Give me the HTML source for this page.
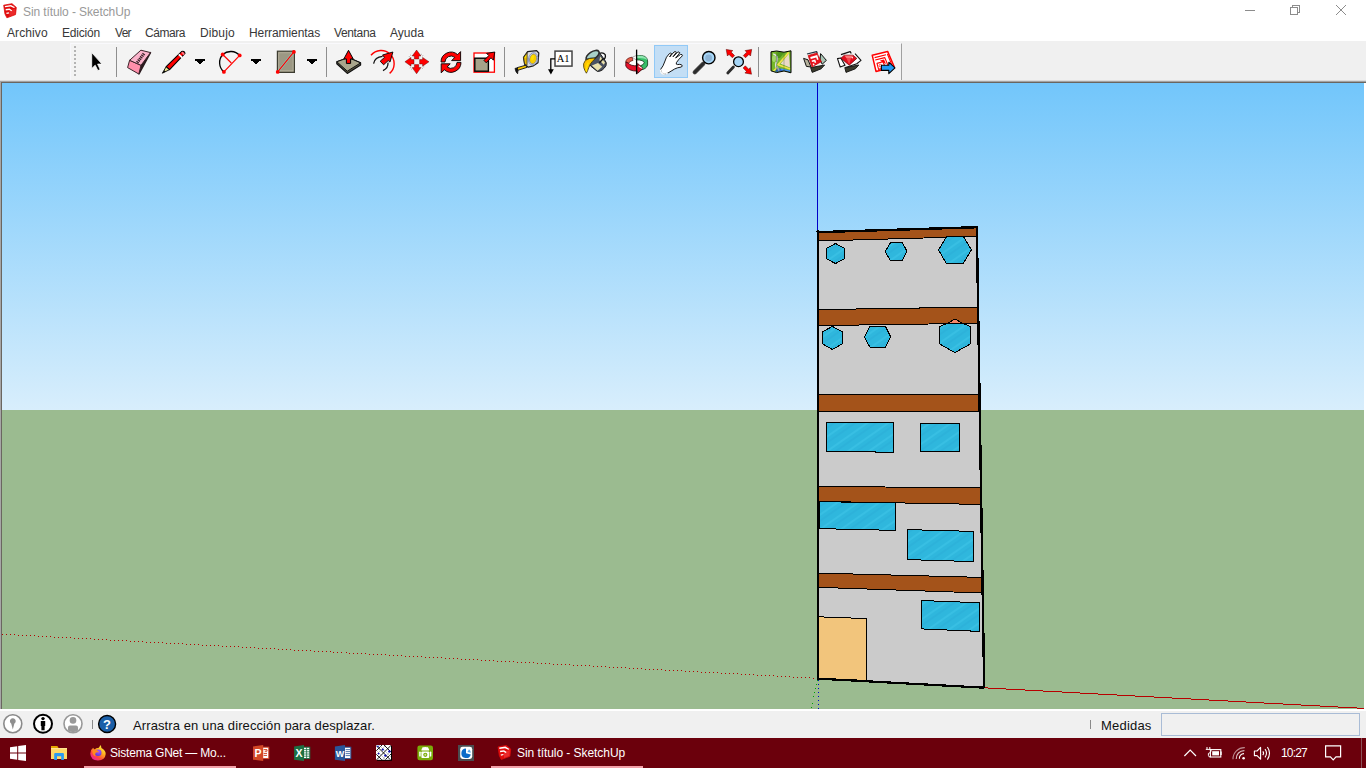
<!DOCTYPE html>
<html>
<head>
<meta charset="utf-8">
<title>Sin título - SketchUp</title>
<style>
html,body{margin:0;padding:0;}
body{width:1366px;height:768px;overflow:hidden;position:relative;background:#ffffff;font-family:"Liberation Sans",sans-serif;}
.abs{position:absolute;}
.t{position:absolute;white-space:nowrap;line-height:1;}
#titletxt{left:23px;top:6px;font-size:12px;color:#999999;letter-spacing:-0.1px;}
.menu{top:27px;font-size:12px;color:#383838;}
#toolband{left:0;top:41px;width:1366px;height:40px;background:#f0f0f0;}
#toolbar{left:70px;top:43px;width:832px;height:38px;background:#f3f3f3;border-right:1px solid #a0a0a0;border-top:1px solid #f9f9fc;border-left:1px solid #f7f7fb;box-sizing:border-box;}
#tbshadow{left:0;top:80px;width:1366px;height:3px;background:linear-gradient(#dcdcdc 0,#dcdcdc 1px,#a2a2a2 1px,#a2a2a2 2px,#6a6660 2px);}
#vp{left:0;top:82px;width:1366px;height:627px;background:linear-gradient(90deg,#a6a6a6 0,#a6a6a6 1px,#6a6660 1px);}
#sky{left:2px;top:83px;width:1362px;height:327px;background:linear-gradient(#72c6fb,#d8eefc);}
#ground{left:2px;top:410px;width:1362px;height:299px;background:#9bbb90;}
#vpright{left:1364px;top:83px;width:2px;height:626px;background:#ffffff;}
#status{left:0;top:709px;width:1366px;height:29px;background:#f0f0f0;border-top:2px solid #ffffff;box-sizing:border-box;}
#stxt{left:133px;top:719px;font-size:13px;color:#111111;letter-spacing:0.1px;}
#medidas{left:1101px;top:719px;font-size:13px;color:#111111;letter-spacing:0.2px;}
#mbox{left:1161px;top:713px;width:199px;height:23px;border:1px solid #a9bcd6;box-sizing:border-box;background:#f0f0f0;}
#taskbar{left:0;top:738px;width:1366px;height:30px;background:#6b000c;}
.tk{position:absolute;white-space:nowrap;line-height:1;font-size:12px;color:#ffffff;top:747px;}
svg{position:absolute;left:0;top:0;overflow:visible;}
</style>
</head>
<body>
<!-- title + menu -->
<div class="t" id="titletxt">Sin título - SketchUp</div>
<div class="t menu" style="left:7px;letter-spacing:0.1px">Archivo</div>
<div class="t menu" style="left:62px;letter-spacing:-0.2px">Edición</div>
<div class="t menu" style="left:115px;letter-spacing:-0.7px">Ver</div>
<div class="t menu" style="left:145px;letter-spacing:-0.45px">Cámara</div>
<div class="t menu" style="left:200px;letter-spacing:0.12px">Dibujo</div>
<div class="t menu" style="left:249px;letter-spacing:-0.08px">Herramientas</div>
<div class="t menu" style="left:334px;letter-spacing:-0.36px">Ventana</div>
<div class="t menu" style="left:390px;letter-spacing:0px">Ayuda</div>

<!-- toolbar band -->
<div class="abs" id="toolband"></div>
<div class="abs" id="toolbar"></div>
<div class="abs" id="tbshadow"></div>

<!-- viewport -->
<div class="abs" id="vp"></div>
<div class="abs" id="sky"></div>
<div class="abs" id="ground"></div>
<div class="abs" id="vpright"></div>

<!-- status bar -->
<div class="abs" id="status"></div>
<div class="t" id="stxt">Arrastra en una dirección para desplazar.</div>
<div class="t" id="medidas">Medidas</div>
<div class="abs" id="mbox"></div>

<!-- taskbar -->
<div class="abs" id="taskbar"></div>
<div class="tk" style="left:110px;letter-spacing:-0.21px">Sistema GNet — Mo...</div>
<div class="tk" style="left:517px;letter-spacing:-0.06px">Sin título - SketchUp</div>
<div class="tk" style="left:1281px;letter-spacing:-0.85px">10:27</div>

<!--TB--><svg id="tbicons" width="1366" height="768" viewBox="0 0 1366 768">
<g id="sulogo"><path d="M3.7 5.2 L12 3.7 L16.3 7.4 L15.5 14.6 L6.9 17.8 L4.9 13.8 Z" fill="#e00b0b" stroke="#e00b0b" stroke-width="0.8" stroke-linejoin="round"/>
<path d="M9.4 10.6 L15.4 8.4 L15 14.2 L9.6 16.2 Z" fill="#ea2a2a"/>
<path d="M4.8 5.9 L11 4.9 L15 7.2 L14 8.1 L10.6 6.5 L5 7.3 Z M5.6 9.1 L9.6 8.5 L12.2 10.4 L11.4 11.3 L9.2 10 L5.8 10.6 Z M6.2 12.8 L8.8 12.3 L9.2 13.4 L6.6 14 Z" fill="#fff"/></g>
<g fill="none" stroke="#8c8c8c" stroke-width="1" shape-rendering="crispEdges">
<line x1="1245" y1="10.5" x2="1255" y2="10.5"/>
<rect x="1290.5" y="7.5" width="7" height="7"/>
<path d="M1292.5 7.5 V5.5 H1299.5 V12.5 H1297.5"/>
</g>
<path d="M1336 5 L1346 15 M1346 5 L1336 15" stroke="#8c8c8c" stroke-width="1" fill="none"/>
</svg><!--/TB-->
<!--SCENE-->
<svg id="scene" width="1366" height="768" viewBox="0 0 1366 768" shape-rendering="crispEdges">
<defs>
<pattern id="glass" width="14" height="12" patternUnits="userSpaceOnUse" patternTransform="rotate(-35)">
<rect width="14" height="12" fill="#2fb7dd"/>
<rect x="0" y="3" width="14" height="2" fill="#48cdee" opacity="0.35"/>
<rect x="0" y="8" width="14" height="1.5" fill="#27a8d2" opacity="0.35"/>
</pattern>
<clipPath id="vpclip"><rect x="2" y="83" width="1362" height="626"/></clipPath>
</defs>
<g clip-path="url(#vpclip)">
<!-- axes -->
<line x1="817.5" y1="83" x2="817.5" y2="232" stroke="#0000c8" stroke-width="1"/>
<line x1="2" y1="634.2" x2="817" y2="678.3" stroke="#b40000" stroke-width="1" stroke-dasharray="1 3"/>
<line x1="984" y1="687.8" x2="1364" y2="708.4" stroke="#b80000" stroke-width="1"/>
<line x1="818.5" y1="680" x2="818.5" y2="709" stroke="#0000c8" stroke-width="1" stroke-dasharray="1 3"/>
<line x1="817.5" y1="680" x2="811" y2="709" stroke="#00a000" stroke-width="1" stroke-dasharray="1 3"/>
<!-- wall -->
<polygon points="817.5,232 976.5,227 984,687.5 818,678.5" fill="#cbcbcb"/>
<!-- band 1 (top) -->
<polygon points="818,232.6 976,227.6 976.3,236.5 818,241" fill="#a4531a"/>
<polyline points="818,241 976.3,236.5" fill="none" stroke="#000" stroke-width="1"/>
<!-- band 2 -->
<polygon points="818,309.6 977.5,307.1 977.8,323.3 818,325.6" fill="#a4531a" stroke="#000" stroke-width="1"/>
<!-- band 3 -->
<polygon points="818,394.4 978.8,394.4 979,411.6 818,411.6" fill="#a4531a" stroke="#000" stroke-width="1"/>
<!-- band 4 -->
<polygon points="818,486.3 980.3,488 980.6,504.4 818,501.4" fill="#a4531a" stroke="#000" stroke-width="1"/>
<!-- band 5 -->
<polygon points="818,573.1 982,577.4 982.3,593 818,587.3" fill="#a4531a" stroke="#000" stroke-width="1"/>
<!-- hexagons floor 1 -->
<polygon points="835.5,243.5 844.6,248.4 844.6,258.6 835.5,263.6 826.5,258.6 826.5,248.4" fill="url(#glass)" stroke="#000" stroke-width="1"/>
<polygon points="885.1,251.8 890.6,242.4 902.3,242.4 906.9,251.2 902.3,260.6 890.4,260.6" fill="url(#glass)" stroke="#000" stroke-width="1"/>
<polygon points="938.5,250 946.5,236.8 963.5,236.8 971.5,249.8 963.3,263.3 946.2,263.3" fill="url(#glass)" stroke="#000" stroke-width="1"/>
<!-- hexagons floor 2 -->
<polygon points="832.3,326.4 842.7,332 842.7,343.6 832.3,349.5 822.2,343.6 822.2,332" fill="url(#glass)" stroke="#000" stroke-width="1"/>
<polygon points="864.3,337 870.2,326 885.2,326 890.5,336.6 885.2,347.6 870.2,347.6" fill="url(#glass)" stroke="#000" stroke-width="1"/>
<polygon points="955,319 962.5,323.4 947.5,323.4" fill="#f4876a" stroke="#000" stroke-width="1"/>
<polygon points="947.5,323.4 962.5,323.4 970.4,326.4 970.6,343.8 955,352.6 939.3,343.8 939.3,326.6" fill="url(#glass)" stroke="#000" stroke-width="1"/>
<!-- windows floor 3 -->
<polygon points="826.3,422.3 893,422.3 893,452.4 875,452.4 875,451.6 826.3,451.6" fill="url(#glass)" stroke="#000" stroke-width="1"/>
<rect x="920.3" y="423.3" width="39.4" height="28.3" fill="url(#glass)" stroke="#000" stroke-width="1"/>
<!-- windows floor 4 -->
<polygon points="819,501.6 895.5,503 895.5,530.4 819,528.6" fill="url(#glass)" stroke="#000" stroke-width="1"/>
<polygon points="907.3,529.6 973.7,531.4 973.7,561.6 907.3,559.6" fill="url(#glass)" stroke="#000" stroke-width="1"/>
<!-- window floor 5 -->
<polygon points="921.5,600.5 979.6,602.8 979.6,631.4 921.5,628.9" fill="url(#glass)" stroke="#000" stroke-width="1"/>
<!-- door -->
<polygon points="818.2,616.8 866.5,618.6 866.5,680.4 818.2,678.5" fill="#f2c57c" stroke="#000" stroke-width="1"/>
<!-- outline -->
<polyline points="816.5,232.2 977.5,227.2" fill="none" stroke="#000" stroke-width="2.4"/>
<polyline points="817.7,230 818.2,679" fill="none" stroke="#000" stroke-width="2.4"/>
<polyline points="976.8,226 984.2,688" fill="none" stroke="#000" stroke-width="2.4"/>
<polyline points="817.5,678.6 984.5,687.7" fill="none" stroke="#000" stroke-width="2.2"/>
</g>
</svg>
<!--/SCENE-->
<!--ICONS-->
<svg id="icons" width="1366" height="768" viewBox="0 0 1366 768">
<!-- gripper -->
<g fill="#b4b4b4">
<rect x="74" y="46" width="2" height="2"/><rect x="74" y="50" width="2" height="2"/><rect x="74" y="54" width="2" height="2"/><rect x="74" y="58" width="2" height="2"/><rect x="74" y="62" width="2" height="2"/><rect x="74" y="66" width="2" height="2"/><rect x="74" y="70" width="2" height="2"/><rect x="74" y="74" width="2" height="2"/>
</g>
<!-- separators -->
<g stroke="#8e8e8e" stroke-width="1" shape-rendering="crispEdges">
<line x1="116.5" y1="47" x2="116.5" y2="77"/>
<line x1="326.5" y1="47" x2="326.5" y2="77"/>
<line x1="504.5" y1="47" x2="504.5" y2="77"/>
<line x1="614.5" y1="47" x2="614.5" y2="77"/>
<line x1="758.5" y1="47" x2="758.5" y2="77"/>
</g>
<!-- select arrow -->
<path d="M91.7 52.6 L91.7 68.6 L95.2 65.2 L97.9 70.6 L100.2 69.5 L97.6 64.1 L102 64.1 Z" fill="#000" stroke="#fff" stroke-width="0.8" stroke-linejoin="round"/>
<!-- eraser -->
<g stroke-linejoin="round">
<path d="M150.5 52.6 L139 74 L141 65.3 Z" fill="#2a1a1e" stroke="#2a1a1e" stroke-width="1.4"/>
<path d="M129.6 60.3 L141 65.3 L138.8 74 L127.6 67.6 Z" fill="#ff8fab" stroke="#3a2228" stroke-width="1"/>
<path d="M140.9 50.2 L150.5 52.6 L141 65.3 L129.6 60.3 Z" fill="#fbb3cb" stroke="#3a2228" stroke-width="1"/>
<path d="M137.2 62.6 L144 53.6" stroke="#3a2228" stroke-width="3" stroke-dasharray="1.3 0.7" fill="none"/>
</g>
<!-- pencil -->
<g>
<path d="M162.4 73.2 L166.2 66.6 L169.6 69.6 Z" fill="#e8e090" stroke="#000" stroke-width="0.9" stroke-linejoin="round"/>
<path d="M162.4 73.2 L164.3 70.2 L165.7 71.4 Z" fill="#000"/>
<path d="M166.2 66.6 L181.6 51.6 Q184.2 50.6 185 53.4 L169.6 69.6 Z" fill="#f00" stroke="#000" stroke-width="1.1" stroke-linejoin="round"/>
<path d="M178.8 54.4 L182.2 57.6" stroke="#fff" stroke-width="1.8"/>
<path d="M181.8 52.2 L184.3 54.6" stroke="#ff7d8d" stroke-width="1.6"/>
</g>
<!-- dropdown arrows -->
<g fill="#000" shape-rendering="crispEdges">
<path d="M195 59 h10 v2 h-2 v1 h-1 v1 h-1 v1 h-2 v-1 h-1 v-1 h-1 v-1 h-2 z"/>
<path d="M251 59 h10 v2 h-2 v1 h-1 v1 h-1 v1 h-2 v-1 h-1 v-1 h-1 v-1 h-2 z"/>
<path d="M307 59 h10 v2 h-2 v1 h-1 v1 h-1 v1 h-2 v-1 h-1 v-1 h-1 v-1 h-2 z"/>
</g>
<!-- arc -->
<g fill="none">
<path d="M223.9 71.9 A12.2 12.2 0 0 1 222.7 54.5 A12.2 12.2 0 0 1 239.7 55.4" stroke="#000" stroke-width="1.3"/>
<path d="M239.7 55.4 L223.9 71.9 M222.7 54.5 L231.3 63" stroke="#f00" stroke-width="1.2"/>
<circle cx="222.7" cy="54.5" r="1.9" fill="#f00"/><circle cx="239.7" cy="55.4" r="1.9" fill="#f00"/><circle cx="223.9" cy="71.9" r="1.9" fill="#f00"/>
</g>
<!-- rectangle -->
<g>
<rect x="277.4" y="51.2" width="17" height="21.2" fill="#9c9884" stroke="#3c3c30" stroke-width="1.2"/>
<rect x="278.8" y="52.8" width="14.2" height="18" fill="none" stroke="#b8b4a0" stroke-width="0.7"/>
<path d="M277.7 71.9 L293.9 51.9" stroke="#7fe0d0" stroke-width="2.2"/>
<path d="M277.7 71.9 L293.9 51.9" stroke="#f00" stroke-width="1.3"/>
<circle cx="277.7" cy="71.9" r="1.9" fill="#f00"/><circle cx="293.9" cy="51.9" r="1.9" fill="#f00"/>
</g>
<!-- push/pull -->
<g stroke-linejoin="round">
<path d="M336.8 61.7 L348.5 57.6 L360.6 62.9 L360.6 65 L347.3 73.4 L336.8 63.8 Z" fill="#55523f" stroke="#111" stroke-width="1.2"/>
<path d="M336.8 61.7 L348.5 57.6 L360.6 62.9 L347.3 71.2 Z" fill="#a9a68c" stroke="#111" stroke-width="1"/>
<path d="M348.5 50.3 L353.2 58.9 L350.6 58.9 L350.6 63.4 L346.4 63.4 L346.4 58.9 L343.9 58.9 Z" fill="#f00" stroke="#000" stroke-width="1"/>
</g>
<!-- offset -->
<g fill="none">
<path d="M371 55.3 A13.03 13.03 0 1 1 389.6 73.4" stroke="#f00" stroke-width="1.4"/>
<path d="M373.6 63.6 Q374.8 57 382.6 56.4" stroke="#111" stroke-width="1.3"/>
<path d="M388 62.6 Q388.4 68 383 70.7" stroke="#111" stroke-width="1.3"/>
<path d="M392.9 52 L390 62.1 L388.2 60.6 L383.6 64.8 L380.2 61.2 L384.5 57.4 L382.5 55 Z" fill="#f00" stroke="#000" stroke-width="0.9" stroke-linejoin="round"/>
</g>
<!-- move -->
<g>
<path d="M409 57 L412 54 M421 54 L424 57 M424 66.5 L421 69.5 M412 69.5 L409 66.5" stroke="#fff" stroke-width="2" />
<path d="M409 57 L412 54 M421 54 L424 57 M424 66.5 L421 69.5 M412 69.5 L409 66.5" stroke="#bbb" stroke-width="1.6" stroke-dasharray="1 1"/>
<rect x="414" y="59.2" width="5.2" height="5.2" fill="#eee"/>
<g fill="#f00" stroke="#400" stroke-width="0.4">
<path d="M416.6 50 L421 56 L418.8 56 L418.8 59 L414.4 59 L414.4 56 L412.2 56 Z"/>
<path d="M416.6 73.8 L421 67.6 L418.8 67.6 L418.8 64.6 L414.4 64.6 L414.4 67.6 L412.2 67.6 Z"/>
<path d="M404.9 61.8 L411 57.4 L411 59.6 L414 59.6 L414 64 L411 64 L411 66.2 Z"/>
<path d="M429 61.8 L422.6 57.4 L422.6 59.6 L419.6 59.6 L419.6 64 L422.6 64 L422.6 66.2 Z"/>
</g>
</g>
<!--ICONS2-->
<!-- rotate -->
<g fill="#f00" stroke="#000" stroke-width="0.9" stroke-linejoin="round">
<path d="M441 62 A10 10 0 0 1 457.6 54.6 L460.6 51.6 L460.6 60.6 L451.6 60.6 L454.8 57.4 A6 6 0 0 0 445 62 Z"/>
<path d="M461 62.4 A10 10 0 0 1 444.4 69.8 L441.2 72.8 L441.2 63.8 L450.2 63.8 L447.2 67 A6 6 0 0 0 457 62.4 Z"/>
</g>
<!-- scale -->
<g>
<rect x="474" y="53" width="20.4" height="19.2" fill="#fff" stroke="#f00" stroke-width="1.3"/>
<rect x="474.8" y="58.2" width="13.6" height="13" fill="#a6a38a" stroke="#000" stroke-width="1.4"/>
<path d="M494.8 52 L493.4 60.2 L491 57.8 L486.2 62.8 L484 60.4 L488.8 55.6 L486.6 53.4 Z" fill="#f00" stroke="#000" stroke-width="0.9" stroke-linejoin="round"/>
</g>
<!-- tape measure -->
<g stroke-linejoin="round">
<path d="M517 67.7 L526.4 65 L527 67.4 L517.8 70.3 Z" fill="#f7c800" stroke="#111" stroke-width="0.9"/>
<path d="M515 68.4 L517.2 68 L518 70.6 L517.6 73.8 Q515.6 72 515 68.4 Z" fill="#111" stroke="#111" stroke-width="0.8"/>
<path d="M523.5 57.4 L527.6 51.6 L536.6 50.6 L538.8 53 L538 62.8 L533.4 65.8 L528.2 67.2 L524.6 64.2 Z" fill="#dcdcdc" stroke="#1c1c1c" stroke-width="1.2"/>
<path d="M523.6 57.6 L527.2 52.6 L527 65.4 L524.6 63.8 Z" fill="#e8b800" stroke="#222" stroke-width="0.7"/>
<path d="M524.8 56.8 L526.2 55 L526.2 58.6 Z" fill="#fff200"/>
<ellipse cx="533.1" cy="58.8" rx="4.6" ry="6.2" transform="rotate(14 533.1 58.8)" fill="#f4f4f8" stroke="#7888b8" stroke-width="0.8"/>
<ellipse cx="533.1" cy="58.9" rx="3.5" ry="5.1" transform="rotate(14 533.1 58.9)" fill="#f8cc00" stroke="#5a6aa0" stroke-width="0.6"/>
<ellipse cx="532.6" cy="57.6" rx="1.4" ry="2.6" transform="rotate(14 532.6 57.6)" fill="#ffe000"/>
</g>
<!-- text tool -->
<g>
<rect x="555" y="51.1" width="17" height="15" fill="#fff" stroke="#444" stroke-width="1.5"/>
<text x="563.2" y="62.3" style="font-family:'Liberation Serif',serif;font-size:10.5px" text-anchor="middle" fill="#000">A1</text>
<path d="M555 58.9 L550.8 58.9 L550.8 70" fill="none" stroke="#000" stroke-width="1.3"/>
<path d="M548 69.2 L553.8 69.2 L550.9 74.6 Z" fill="#000"/>
</g>
<!-- paint bucket -->
<g stroke-linejoin="round">
<path d="M598.8 53.6 Q603 51.6 605.2 54.6 Q606.2 58 603 60 L599.6 62.4" fill="#fafafa" stroke="#111" stroke-width="1.3"/>
<path d="M585.8 59.4 L590.6 66 L597.4 71.4 Q602.6 71.6 606 65.6 Q607 62.6 605 60.4 L599.2 52.4 Z" fill="#4a5262" stroke="#1a1a1a" stroke-width="1"/>
<path d="M591.8 65.6 L598 63 L602.2 66.8 L597.6 70.7 Z" fill="#e9e0aa"/>
<path d="M600.2 56.6 L605 62.6 L603.8 64.8 L599.4 60.2 Z" fill="#e9e0aa"/>
<path d="M599.4 62.8 L603.4 58.6" stroke="#111" stroke-width="1.4" fill="none"/>
<ellipse cx="592.6" cy="55.5" rx="7.4" ry="3.7" transform="rotate(-33 592.6 55.5)" fill="#a8d0c8" stroke="#2c2c2c" stroke-width="1.6"/>
<path d="M586.6 58.6 Q590 57.6 595.4 57.6 L593.6 60 L587 61.4 Z" fill="#1e3a6a"/>
<path d="M595.2 58 Q588.6 57.8 585.4 60.4 Q582.6 63.6 583.8 67.6 Q584.8 71 586.4 73.2 Q587.8 70.6 588.8 67.6 Q590 63.6 592.4 61.4 Q594.4 59.6 595.2 58 Z" fill="#ffc400" stroke="#3a3000" stroke-width="0.8"/>
<path d="M586.4 71.6 Q586 66 588.4 62.6" stroke="#ffe400" stroke-width="1.2" fill="none"/>
</g>
<!-- orbit -->
<g stroke-linejoin="round">
<ellipse cx="636.6" cy="62.4" rx="8" ry="3.4" fill="#fff"/>
<path d="M636.6 55.4 L632 57.4 L636.6 60 Z" fill="#fff" stroke="#666" stroke-width="0.5"/>
<path d="M636.6 55.6 Q647.4 54.6 647.6 61 L647.6 65 Q646.4 69.2 640.4 70 L640.4 65.8 Q644 64.8 644.2 62.6 Q643.6 60 636.6 59.8 Z" fill="#36bf68" stroke="#0a3a18" stroke-width="0.8"/>
<path d="M636.6 55.6 Q646 55 647.4 60.2 Q644.6 57.6 636.6 58 Z" fill="#8fe6b0"/>
<path d="M632 57.2 Q626 58 625.8 62 L628.6 63.4 Q629.4 61 633 60.4 Z" fill="#e8604a" stroke="#5a0a0a" stroke-width="0.7"/>
<path d="M625.8 62 L625.8 66 Q628 71 637.6 71.2 L637.6 73.4 L643 68.4 L637.6 63.4 L637.6 65.8 Q630.6 66 628.6 63.4 Z" fill="#e8122c" stroke="#3a0008" stroke-width="0.8"/>
<path d="M643 68.4 L638.6 65.4 L638.6 66.8 L641.4 68.4 Z" fill="#fff"/>
<line x1="636.6" y1="49.6" x2="636.6" y2="74.2" stroke="#000" stroke-width="1.3"/>
</g>
<!-- pan (selected) -->
<rect x="654.5" y="45.5" width="33" height="32" fill="#c3def5" stroke="#91c9f7" stroke-width="1"/>
<path d="M660.6 69.4 Q663.4 66 664.6 62 Q666 56.6 669.4 53.6 Q670.6 52.6 671.6 53.6 L669.6 57 L674 52 Q675.4 51 676.4 52.2 L673 56.8 L677.6 52.2 Q679.2 51.4 679.8 52.8 L675.6 58 L680.6 54.4 Q682.4 54 682.4 55.8 Q678.6 59.2 676.4 62.6 Q675.6 64.6 677.6 64.6 Q680 64 681.6 64.8 Q683 66 681.4 67 Q677 67.6 674.6 69 Q671 71.2 668 73 Q664.6 74.6 662.4 73.6 Q660.6 72 660.6 69.4 Z" fill="#fff" stroke="#000" stroke-width="0.9" stroke-linejoin="round"/>
<path d="M660.6 69.6 Q660.4 72.6 662.6 73.8 Q665 74.6 668 73" fill="none" stroke="#fff" stroke-width="1.4"/>
<!-- zoom -->
<g>
<path d="M703.2 63.8 L694.8 72.2" stroke="#555" stroke-width="4.4" stroke-linecap="round"/>
<path d="M703.2 63.8 L694.8 72.2" stroke="#2c2c2c" stroke-width="3" stroke-linecap="round"/>
<circle cx="708.8" cy="57.7" r="6.2" fill="#a6d6f7" stroke="#000" stroke-width="1.4"/>
<circle cx="708.6" cy="58" r="3.4" fill="#8db4d6"/>
</g>
<!-- zoom extents -->
<g>
<path d="M733.4 67 L727.8 73" stroke="#2c2c2c" stroke-width="2.8" stroke-linecap="round"/>
<circle cx="738.5" cy="61.7" r="4.9" fill="#a6d6f7" stroke="#000" stroke-width="1.3"/>
<g fill="#f00" stroke="#500" stroke-width="0.5" stroke-linejoin="round">
<path d="M726.2 49.4 L732.8 50.6 L731.2 52.2 L734.6 55.6 L732.4 57.8 L729 54.4 L727.4 56 Z"/>
<path d="M751.7 49.4 L745.1 50.6 L746.7 52.2 L743.3 55.6 L745.5 57.8 L748.9 54.4 L750.5 56 Z"/>
<path d="M751.5 74.2 L744.9 73 L746.5 71.4 L743.1 68 L745.3 65.8 L748.7 69.2 L750.3 67.6 Z"/>
</g>
</g>
<!--ICONS3-->
<!-- map -->
<g stroke-linejoin="round">
<path d="M771 51.8 L776.6 51 L784 52.2 L791 50.8 L791 72.8 L784 71 L776.6 72.6 L771 70.8 Z" fill="#76b82a"/>
<path d="M777.4 51.6 L784 52.8 L780 58 L777 58 Z" fill="#4f961c"/>
<ellipse cx="774" cy="58.6" rx="1.9" ry="3.4" fill="#a4d668"/>
<path d="M773.2 53.8 Q778.6 55.4 776.6 61.6 Q775 64.4 776.4 68.4" fill="none" stroke="#e4e4ec" stroke-width="1.4"/>
<path d="M776.6 62 Q778 59 776.4 55" fill="none" stroke="#9090a8" stroke-width="0.8"/>
<path d="M789 53.6 L780.6 63.8 L790 67.4 Z" fill="#ead9c8"/>
<path d="M777.6 68 L790.4 70.4 L790.4 72 L784 70.4 L776.8 72 L775 71.2 Z" fill="#2a62c4"/>
<path d="M781 69.2 L790 71" stroke="#4a96ec" stroke-width="1.2"/>
<path d="M788.8 52.4 L778 64.8 L790.2 69" fill="none" stroke="#f2e04a" stroke-width="1.7"/>
<path d="M776.4 68.2 L773.4 71" stroke="#f2e04a" stroke-width="1.5"/>
<path d="M776.8 66 L779 70.6" stroke="#a8a8a0" stroke-width="1.6"/>
<path d="M771 51.8 L776.6 51 L784 52.2 L791 50.8 L791 72.8 L784 71 L776.6 72.6 L771 70.8 Z" fill="none" stroke="#000" stroke-width="1"/>
<path d="M776.6 51.2 V72.4 M784 52.4 V70.8" stroke="#2a4a10" stroke-width="0.5" opacity="0.6"/>
</g>
<!-- 3d warehouse -->
<g stroke-linejoin="round">
<path d="M810.6 67.6 L824.6 65 L821.2 68.8 L812.2 72.4 Z" fill="#3a3a2c" stroke="#111" stroke-width="0.9"/>
<path d="M803.6 58.4 L808 59.8 L811 67 L806.4 66.4 Z" fill="#b4b19c" stroke="#111" stroke-width="1"/>
<path d="M807 54 L816.6 51.6 L817.4 53.4" fill="none" stroke="#234" stroke-width="1.2"/>
<path d="M820.6 53.6 L826.4 60.4 L822.2 64.2 L820 60 Z" fill="#a9c6b6" stroke="#111" stroke-width="1"/>
<path d="M808.1 55.5 L816.9 52.9 L821.4 61.7 L811.9 67 Z" fill="#e8101c" stroke="#b00" stroke-width="0.6"/>
<path d="M810.2 57 L817.2 55 L818.6 59.6 L817 60 L816.2 57.4 L810.8 59 Z M811.6 60.6 L815.2 59.6 L816.2 62.6 L814.8 63 L814.2 61.4 L812 62 Z M812.6 63.8 L814 63.4 L814.6 65 L813.2 65.4 Z" fill="#fff"/>
</g>
<!-- extension warehouse -->
<g stroke-linejoin="round">
<path d="M844.8 67.6 L858.8 65 L855.4 68.8 L846 72.4 Z" fill="#3a3a2c" stroke="#111" stroke-width="0.9"/>
<path d="M837.5 58.6 L840.8 58 L845 65.2 L840.2 67 Z" fill="#fff" stroke="#111" stroke-width="1.1"/>
<path d="M841 54.6 L850.2 51.6 L851.2 53.6" fill="#fff" stroke="#111" stroke-width="1.2"/>
<path d="M855 53.6 L861 60.4 L856.8 63.8 L845.6 67.4" fill="#fff" stroke="#111" stroke-width="1.1"/>
<path d="M840.9 58.2 L844.4 55.2 L853 55.2 L856.8 58.4 L849.2 65.2 Z" fill="#e30d1c" stroke="#6a0008" stroke-width="0.7"/>
<path d="M844.4 55.4 L853 55.4 L851 58 L846.4 58 Z" fill="#ff7878"/>
<path d="M846.4 58 L851 58 L849.2 64.6 Z" fill="#f24a50"/>
<path d="M851.4 57.6 l0.8 -1.2 l0.8 1.2 l-0.8 1.2 z" fill="#fff"/>
</g>
<!-- layout -->
<g stroke-linejoin="round">
<path d="M872.2 55.2 L887.6 51.4 L894.2 66.8 L876 71.4 Z" fill="#fff" stroke="#f00" stroke-width="1.5"/>
<path d="M874.6 57.6 L886 54.8 M875.2 60 L884.8 57.6 L888.6 67 M877 63.4 L883 61.8 L885.4 67.6 L878.6 69.4 Z M887.4 54 L892.4 66.4" fill="none" stroke="#f00" stroke-width="1.1"/>
<path d="M880 60.6 L884 59.6 L886 64 L882 62 Z" fill="#f00"/>
<circle cx="880.4" cy="65.6" r="1.3" fill="none" stroke="#f00" stroke-width="0.7"/>
<path d="M881.4 65.2 L888.8 65.2 L888.8 62.2 L895 67.8 L888.8 73.6 L888.8 70.4 L881.4 70.4 Z" fill="#1f9af5" stroke="#000" stroke-width="1.1"/>
</g>
<!--/ICONS3-->
<!--/ICONS2-->
</svg>
<!--/ICONS-->
<!--STATUSICONS-->
<svg id="sticons" width="1366" height="768" viewBox="0 0 1366 768">
<!-- geo -->
<circle cx="12.8" cy="723.8" r="9" fill="#fff" stroke="#8a8a8a" stroke-width="1.6"/>
<path d="M12.8 729.4 L11.2 723.6 A2.9 2.9 0 1 1 14.4 723.6 Z" fill="#8f8f8f"/>
<!-- person -->
<circle cx="43" cy="723.8" r="9" fill="#fff" stroke="#000" stroke-width="2"/>
<circle cx="43" cy="718.6" r="1.7" fill="#000"/>
<path d="M40.8 721 H45.2 V726 H44.6 V730.2 H41.4 V726 H40.8 Z" fill="#000"/>
<!-- user -->
<clipPath id="ucl"><circle cx="73" cy="723.8" r="8.4"/></clipPath>
<circle cx="73" cy="723.8" r="9" fill="#fff" stroke="#999" stroke-width="1.6"/>
<g clip-path="url(#ucl)" fill="#999"><circle cx="73" cy="720.4" r="3.3"/><rect x="68" y="725.6" width="10" height="9" rx="2"/></g>
<line x1="92.5" y1="720" x2="92.5" y2="729" stroke="#8a8a8a" stroke-width="1"/>
<!-- help -->
<circle cx="107.1" cy="724" r="8.5" fill="#1b5fa8" stroke="#000" stroke-width="1.4"/>
<text x="107.1" y="728.8" text-anchor="middle" style="font-family:'Liberation Sans',sans-serif;font-weight:bold;font-size:13px" fill="#fff">?</text>
<line x1="1090.5" y1="720" x2="1090.5" y2="729" stroke="#8a8a8a" stroke-width="1"/>
</svg>
<!--/STATUSICONS-->
<!--TASKICONS-->
<svg id="tkicons" width="1366" height="768" viewBox="0 0 1366 768">
<!-- active bars -->
<rect x="84" y="766" width="152" height="2" fill="#f2a0a8"/>
<rect x="491" y="766" width="152" height="2" fill="#f2a0a8"/>
<rect x="1361" y="738" width="1" height="30" fill="#8c5158"/>
<!-- windows logo -->
<g fill="#fff">
<path d="M10 747.2 L17.2 746.2 L17.2 752.5 L10 752.5 Z"/>
<path d="M18.2 746 L26 744.9 L26 752.5 L18.2 752.5 Z"/>
<path d="M10 753.5 L17.2 753.5 L17.2 759.7 L10 758.7 Z"/>
<path d="M18.2 753.5 L26 753.5 L26 761 L18.2 759.9 Z"/>
</g>
<!-- folder -->
<g>
<path d="M51 746 H57.4 L58.6 748 H51 Z" fill="#e5a800"/>
<rect x="51" y="748" width="16" height="11" fill="#ffd866"/>
<rect x="51" y="748" width="16" height="1.2" fill="#ffe492"/>
<path d="M54.2 754 Q54.2 753 55.2 753 H62.9 Q63.9 753 63.9 754 V760 H61.2 V756.2 H57 V760 H54.2 Z" fill="#2b9af0"/>
</g>
<!-- firefox -->
<defs>
<linearGradient id="ffg" x1="0.85" y1="0.1" x2="0.2" y2="0.95"><stop offset="0" stop-color="#fff040"/><stop offset="0.35" stop-color="#ffb020"/><stop offset="0.7" stop-color="#ff4a38"/><stop offset="1" stop-color="#f01fa0"/></linearGradient>
<radialGradient id="ffp" cx="0.6" cy="0.3" r="0.8"><stop offset="0" stop-color="#b050ff"/><stop offset="1" stop-color="#4a3ad8"/></radialGradient>
</defs>
<g>
<path d="M100.2 745 Q101.6 746.4 101.4 748 Q105.8 750.4 105.7 754 Q105.2 760.2 98 760.4 Q90.6 760.2 90.3 753.4 Q90.4 749.6 93.2 747.8 Q93.6 749 94.6 749.4 Q96.6 747.6 98.4 748 Q99.8 746.8 100.2 745 Z" fill="url(#ffg)"/>
<circle cx="98.2" cy="752.8" r="3.3" fill="url(#ffp)"/>
<path d="M93 749.6 Q95.6 749.4 97.4 750.6 Q99 751.6 98.8 752.6 Q97 751.8 95.8 752.8 Q94.4 754.4 95.6 756.4 Q92.6 755.2 92.4 752 Q92.4 750.6 93 749.6 Z" fill="#ff8a1e"/>
</g>
<!-- powerpoint -->
<g>
<rect x="262" y="747.2" width="6.8" height="11.4" fill="#fff" stroke="#d24726" stroke-width="1"/>
<path d="M263.6 749.6 H267 V751.2 H265 V751.6 M263.6 755.4 H267 M263.6 753.4 H267" stroke="#d24726" stroke-width="1" fill="none"/>
<path d="M253 746.4 L263.2 744.9 L263.2 761 L253 759.7 Z" fill="#d24726"/>
<text x="258" y="757.4" text-anchor="middle" style="font-family:'Liberation Sans',sans-serif;font-weight:bold;font-size:10.5px" fill="#fff">P</text>
</g>
<!-- excel -->
<g>
<rect x="303" y="747.2" width="6.8" height="11.4" fill="#fff" stroke="#1d7044" stroke-width="1"/>
<path d="M303 749.6 H310 M303 751.8 H310 M303 754 H310 M303 756.2 H310 M306.6 747 V759" stroke="#1d7044" stroke-width="0.8" fill="none"/>
<path d="M294.1 746.4 L304 744.9 L304 761 L294.1 759.7 Z" fill="#1d7044"/>
<text x="299" y="757.4" text-anchor="middle" style="font-family:'Liberation Sans',sans-serif;font-weight:bold;font-size:10.5px" fill="#fff">X</text>
</g>
<!-- word -->
<g>
<rect x="344" y="747.2" width="6.8" height="11.4" fill="#fff" stroke="#2a5699" stroke-width="1"/>
<path d="M345.6 749.6 H350 M345.6 751.6 H350 M345.6 753.6 H350 M345.6 755.6 H350" stroke="#2a5699" stroke-width="0.8" fill="none"/>
<path d="M334.9 746.4 L345 744.9 L345 761 L334.9 759.7 Z" fill="#2a5699"/>
<text x="339.9" y="756.8" text-anchor="middle" style="font-family:'Liberation Sans',sans-serif;font-weight:bold;font-size:9px" fill="#fff">W</text>
</g>
<!-- checker -->
<g>
<rect x="377" y="746" width="15" height="14.8" fill="#000"/>
<rect x="376" y="745" width="15" height="14.8" fill="#fff"/>
<clipPath id="ckc"><rect x="376" y="745" width="15" height="14.8"/></clipPath>
<g clip-path="url(#ckc)" stroke="#000" stroke-width="1.1" fill="none">
<path d="M374 753 L384 743 M376 760.4 L392 744.4 M383 762 L394 751 M376 745.4 L391 760.4 M382 743 L393 754 M373 751 L384 762" stroke-width="0.9"/>
<g stroke="#999" stroke-width="0.5"><path d="M374 757 L389 742 M379 763 L393 749 M378 744 L393 759 M374 748 L388 762"/></g>
</g>
<g fill="#0a0ab0"><circle cx="382.8" cy="749.6" r="1.1"/><circle cx="389.4" cy="751.4" r="1.2"/><circle cx="385.4" cy="755.6" r="1.2"/><circle cx="378.6" cy="753.6" r="0.9"/><circle cx="378" cy="746.4" r="0.8"/></g>
</g>
<!-- android -->
<g>
<rect x="417.4" y="745.5" width="15.6" height="14.8" rx="2.2" fill="#7aab0a"/>
<g fill="#fff">
<path d="M421.4 750.6 A3.9 3.6 0 0 1 429.2 750.6 Z"/>
<rect x="421.4" y="751.4" width="7.8" height="6.6" rx="0.8"/>
<rect x="419.2" y="751.6" width="1.5" height="5" rx="0.7"/>
<rect x="429.8" y="751.6" width="1.5" height="5" rx="0.7"/>
<path d="M422.6 747 L423.6 748.4 M428 747 L427 748.4" stroke="#fff" stroke-width="0.7"/>
</g>
<circle cx="425.3" cy="754.8" r="2.1" fill="#7aab0a"/><circle cx="425.3" cy="754.8" r="1" fill="#cfe39a"/>
</g>
<!-- blue app -->
<g>
<rect x="458" y="745" width="16" height="16" fill="#4a4c50"/>
<rect x="460.2" y="746.8" width="12" height="12.2" rx="2.4" fill="#fff"/>
<path d="M466 748.4 A4.8 4.8 0 1 0 470.8 754.4 L466 753.2 Z" fill="#0a6ac8"/>
<path d="M467.4 752 L470.8 752.8 A4.6 4.6 0 0 0 469 749.2 Z" fill="#5aa8e8"/>
</g>
<!-- sketchup logo taskbar -->
<g id="sulogo2" transform="translate(494.4,741.7)"><path d="M3.7 5.2 L12 3.7 L16.3 7.4 L15.5 14.6 L6.9 17.8 L4.9 13.8 Z" fill="#e00b0b" stroke="#e00b0b" stroke-width="0.8" stroke-linejoin="round"/>
<path d="M9.4 10.6 L15.4 8.4 L15 14.2 L9.6 16.2 Z" fill="#ea2a2a"/>
<path d="M4.8 5.9 L11 4.9 L15 7.2 L14 8.1 L10.6 6.5 L5 7.3 Z M5.6 9.1 L9.6 8.5 L12.2 10.4 L11.4 11.3 L9.2 10 L5.8 10.6 Z M6.2 12.8 L8.8 12.3 L9.2 13.4 L6.6 14 Z" fill="#fff"/></g>
<!-- tray: chevron -->
<path d="M1184.4 756 L1190.2 750.2 L1196 756" fill="none" stroke="#fff" stroke-width="1.2"/>
<!-- battery -->
<g fill="none" stroke="#fff" stroke-width="1.1">
<rect x="1210.4" y="749.6" width="10.4" height="7.4"/>
<path d="M1221 751.6 V755" stroke-width="1.4"/>
<rect x="1212.2" y="751.2" width="6.8" height="4.2" fill="#fff" stroke="none"/>
<path d="M1207 747 V749.4 M1209.8 747 V749.4 M1205.8 749.4 H1211 V751 Q1211 753 1208.4 753.4 V755.4 Q1208.4 757 1210.4 757" stroke-width="1"/>
</g>
<!-- wifi -->
<g fill="none" stroke="#fff" stroke-width="1.1">
<circle cx="1243.6" cy="758.2" r="1.3" fill="#fff" stroke="none"/>
<path d="M1239.4 758.8 A4.6 4.6 0 0 1 1244 753.6" />
<path d="M1236.2 759 A8 8 0 0 1 1244.4 750.6" stroke-opacity="0.75"/>
<path d="M1233 759.2 A11.4 11.4 0 0 1 1244.8 747.6" stroke-opacity="0.55"/>
</g>
<!-- volume -->
<g fill="none" stroke="#fff" stroke-width="1.1" stroke-linejoin="round">
<path d="M1254.4 751 H1257 L1260.6 747.4 V759.2 L1257 755.6 H1254.4 Z"/>
<path d="M1262.8 751.4 Q1264.4 753.2 1262.8 755.2"/>
<path d="M1265 749.2 Q1268 753.2 1265 757.4"/>
<path d="M1267.4 747 Q1271.6 753.2 1267.4 759.6"/>
</g>
<!-- notification -->
<path d="M1325.6 745.8 H1340.6 V756.8 H1336 L1333.2 759.8 L1330.4 756.8 H1325.6 Z" fill="none" stroke="#fff" stroke-width="1.2"/>
</svg>
<!--/TASKICONS-->
</body>
</html>
